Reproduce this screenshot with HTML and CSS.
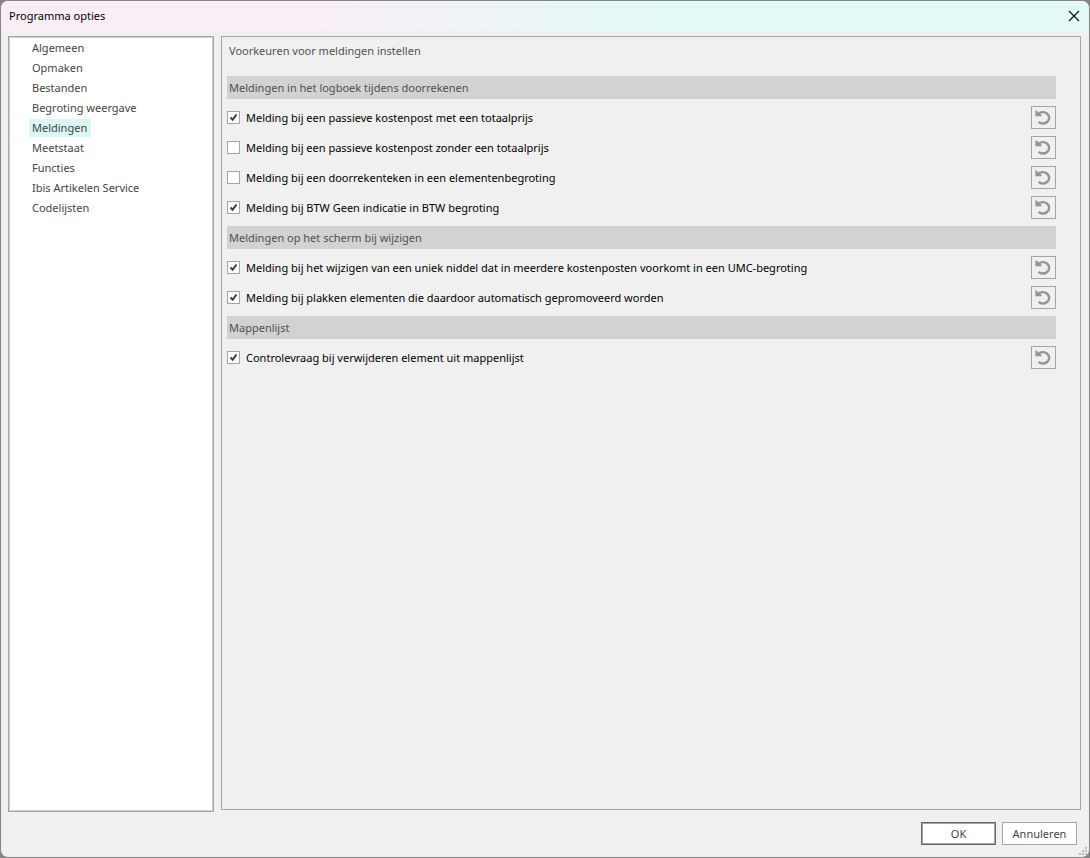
FILE: index.html
```html
<!DOCTYPE html>
<html lang="nl">
<head>
<meta charset="utf-8">
<title>Programma opties</title>
<link rel="stylesheet" href="styles.css">
</head>
<body>
<svg class="symbols" aria-hidden="true">
  <symbol id="reset" viewBox="0 0 17 17">
    <path d="M3 5.4A6.2 5.7 0 1 1 3.6 12.9" fill="none" stroke="#959595" stroke-width="2.4"/>
    <path d="M.4 1.6H1.8L3.8 4.2L6.6 5.8V7.2H.4Z" fill="#959595"/>
  </symbol>
</svg>
<div class="window">
  <header class="titlebar">
    <h1 class="title">Programma opties</h1>
    <button class="close" type="button" aria-label="Sluiten"><svg viewBox="0 0 12 12" width="12" height="12"><path d="M1 1L11 11M11 1L1 11" stroke="#111" stroke-width="1.2"/></svg></button>
  </header>
  <main class="body">
    <nav class="categories">
      <a class="category" href="#">Algemeen</a>
      <a class="category" href="#">Opmaken</a>
      <a class="category" href="#">Bestanden</a>
      <a class="category" href="#">Begroting weergave</a>
      <a class="category selected" href="#" aria-current="page">Meldingen</a>
      <a class="category" href="#">Meetstaat</a>
      <a class="category" href="#">Functies</a>
      <a class="category" href="#">Ibis Artikelen Service</a>
      <a class="category" href="#">Codelijsten</a>
    </nav>
    <section class="panel">
      <p class="intro">Voorkeuren voor meldingen instellen</p>
      <h2 class="group">Meldingen in het logboek tijdens doorrekenen</h2>
      <div class="option"><label class="option-label"><input class="check" type="checkbox" checked>Melding bij een passieve kostenpost met een totaalprijs</label><button class="reset" type="button" aria-label="Herstellen"><svg class="reset-icon"><use href="#reset"/></svg></button></div>
      <div class="option"><label class="option-label"><input class="check" type="checkbox">Melding bij een passieve kostenpost zonder een totaalprijs</label><button class="reset" type="button" aria-label="Herstellen"><svg class="reset-icon"><use href="#reset"/></svg></button></div>
      <div class="option"><label class="option-label"><input class="check" type="checkbox">Melding bij een doorrekenteken in een elementenbegroting</label><button class="reset" type="button" aria-label="Herstellen"><svg class="reset-icon"><use href="#reset"/></svg></button></div>
      <div class="option"><label class="option-label"><input class="check" type="checkbox" checked>Melding bij BTW Geen indicatie in BTW begroting</label><button class="reset" type="button" aria-label="Herstellen"><svg class="reset-icon"><use href="#reset"/></svg></button></div>
      <h2 class="group">Meldingen op het scherm bij wijzigen</h2>
      <div class="option"><label class="option-label"><input class="check" type="checkbox" checked>Melding bij het wijzigen van een uniek niddel dat in meerdere kostenposten voorkomt in een UMC-begroting</label><button class="reset" type="button" aria-label="Herstellen"><svg class="reset-icon"><use href="#reset"/></svg></button></div>
      <div class="option"><label class="option-label"><input class="check" type="checkbox" checked>Melding bij plakken elementen die daardoor automatisch gepromoveerd worden</label><button class="reset" type="button" aria-label="Herstellen"><svg class="reset-icon"><use href="#reset"/></svg></button></div>
      <h2 class="group">Mappenlijst</h2>
      <div class="option"><label class="option-label"><input class="check" type="checkbox" checked>Controlevraag bij verwijderen element uit mappenlijst</label><button class="reset" type="button" aria-label="Herstellen"><svg class="reset-icon"><use href="#reset"/></svg></button></div>
    </section>
  </main>
  <footer class="actions">
    <button class="action default" type="button">OK</button>
    <button class="action" type="button">Annuleren</button>
  </footer>
  <svg class="grip" viewBox="0 0 8 8" aria-hidden="true"><path d="M6 0h2v2H6zM3 3h2v2H3zM6 3h2v2H6zM0 6h2v2H0zM3 6h2v2H3zM6 6h2v2H6z" fill="#bcbcbc"/></svg>
</div>
</body>
</html>
```
FILE: styles.css
```css
* {
  box-sizing: border-box;
}

body {
  margin: 0;
  background: #858585;
  color: #000;
  font: 11px/20px "Noto Sans", "Open Sans", sans-serif;
}

button {
  padding: 0;
  font: inherit;
}

.symbols {
  position: absolute;
  width: 0;
  height: 0;
}

.window {
  position: relative;
  display: flex;
  flex-direction: column;
  height: 100vh;
  border: 1px solid #858585;
  border-radius: 8px;
  background: #f0f0f0;
  overflow: hidden;
}

.titlebar {
  display: flex;
  align-items: center;
  justify-content: space-between;
  height: 30px;
  padding: 0 9px 0 8px;
  background: linear-gradient(90deg, #f9eef8 0%, #f9eef8 28%, #e3f9f7 60%, #e3f9f7 100%);
}

.title {
  margin: 0;
  font-size: 11px;
  font-weight: 400;
}

.close {
  display: flex;
  border: 0;
  background: none;
}

.body {
  flex: 1;
  display: grid;
  grid-template-columns: 206px 1fr;
  gap: 7px;
  padding: 5px 8px 0 7px;
}

.categories {
  display: flex;
  flex-direction: column;
  align-items: flex-start;
  padding: 0 0 0 20px;
  border: 1px solid #a5a5a5;
  box-shadow: inset 0 0 0 1px #d0d0d0;
  background: #fff;
}

.category {
  margin: 1px 0;
  padding: 0 4px 0 3px;
  line-height: 18px;
  color: #444;
  text-decoration: none;
}

.category:first-child {
  margin-top: 2px;
}

.selected {
  background: #daf6f5;
}

.panel {
  margin-bottom: 2px;
  padding: 4px 24px 0 5px;
  border: 1px solid #a5a5a5;
}

.intro {
  margin: 0 0 15px;
  padding: 0 2px;
  color: #505050;
}

.group {
  margin: 4px 0 3px;
  padding: 0 2px;
  background: #d2d2d2;
  color: #505050;
  font-size: 11px;
  font-weight: 400;
  line-height: 23px;
}

.option {
  display: flex;
  align-items: center;
  justify-content: space-between;
  height: 30px;
}

.option-label {
  display: flex;
  align-items: center;
  gap: 6px;
  line-height: 21px;
}

.check {
  appearance: none;
  width: 13px;
  height: 13px;
  margin: 0;
  border: 1px solid #a5a5a5;
  background: #fff;
}

.check:checked {
  background: #fff url("data:image/svg+xml,%3Csvg xmlns='http://www.w3.org/2000/svg' viewBox='0 0 11 11'%3E%3Cpath d='M2.5 5.5L4.7 7.7L8.5 2.5' fill='none' stroke='%23404040' stroke-width='2'/%3E%3C/svg%3E") center / 11px 11px no-repeat;
}

.reset {
  display: grid;
  place-items: center;
  width: 25px;
  height: 23px;
  border: 1px solid #a5a5a5;
  background: #f0f0f0;
}

.reset-icon {
  width: 17px;
  height: 17px;
}

.actions {
  display: flex;
  justify-content: flex-end;
  gap: 6px;
  padding: 10px 12px 12px;
}

.action {
  width: 75px;
  height: 23px;
  padding-top: 1px;
  border: 1px solid #a5a5a5;
  background: #fff;
  color: #444;
}

.default {
  border-color: #666;
  box-shadow: inset 0 0 0 1px #a5a5a5;
}

.grip {
  position: absolute;
  right: 2px;
  bottom: 2px;
  width: 8px;
  height: 8px;
}
```
